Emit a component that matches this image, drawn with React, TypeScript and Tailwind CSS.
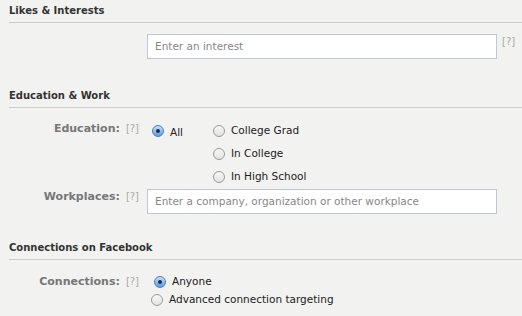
import React from 'react'

const font = { fontFamily: '"Lucida Grande", "DejaVu Sans", "Liberation Sans", sans-serif' }

const Help = () => <span className="ml-[6px] text-[10px] font-normal text-[#aaa]">[?]</span>

const Radio = ({ checked = false }: { checked?: boolean }) => (
  <span
    className={
      checked
        ? 'inline-flex h-[12px] w-[12px] shrink-0 items-center justify-center rounded-full border border-[#4a7fc0] bg-gradient-to-b from-[#c9e0f8] to-[#5a9be0]'
        : 'inline-flex h-[12px] w-[12px] shrink-0 items-center justify-center rounded-full border border-[#9a9a9a] bg-gradient-to-b from-[#f8f8f8] to-[#e2e2e2]'
    }
  >
    {checked && <span className="h-[4px] w-[4px] rounded-full bg-[#1c2f4a]" />}
  </span>
)

const Option = ({ label, checked = false, className = '' }: { label: string; checked?: boolean; className?: string }) => (
  <label className={`flex h-[18px] items-center ${className}`}>
    <Radio checked={checked} />
    <span className="ml-[6px] text-[10.5px] text-[#222]">{label}</span>
  </label>
)

const Heading = ({ children }: { children: React.ReactNode }) => (
  <div className="ml-[9px] border-b border-[#ccc] pb-[4px] pt-[4px] text-[10px] font-bold leading-[14px] text-[#333]">
    {children}
  </div>
)

const Label = ({ children }: { children: React.ReactNode }) => (
  <div className="w-[139px] shrink-0 text-right text-[11px] font-bold leading-[14px] text-[#777]">
    {children}
    <Help />
  </div>
)

const TextBox = ({ placeholder }: { placeholder: string }) => (
  <div className="flex h-[25px] w-[350px] items-center border border-[#bdc7d8] bg-white px-[7px] text-[10.5px] text-[#888]">
    {placeholder}
  </div>
)

export default function App() {
  return (
    <div className="h-[316px] w-[522px] overflow-hidden bg-[#f2f2f0]" style={font}>
      <Heading>Likes &amp; Interests</Heading>
      <div className="mt-[11px] flex">
        <div className="w-[147px] shrink-0" />
        <TextBox placeholder="Enter an interest" />
        <span className="ml-[5px] mt-[1px] text-[10px] leading-[14px] text-[#aaa]">[?]</span>
      </div>

      <div className="mt-[26px]">
        <Heading>Education &amp; Work</Heading>
      </div>
      <div className="mt-[14px] flex">
        <div>
          <Label>Education:</Label>
        </div>
        <div className="ml-[13px] flex">
          <Option label="All" checked className="w-[61px] items-start pt-[3px]" />
          <div className="flex flex-col gap-[5px]">
            <Option label="College Grad" />
            <Option label="In College" />
            <Option label="In High School" />
          </div>
        </div>
      </div>
      <div className="mt-[3px] flex">
        <div className="pt-[1px]">
          <Label>Workplaces:</Label>
        </div>
        <div className="ml-[8px]">
          <TextBox placeholder="Enter a company, organization or other workplace" />
        </div>
      </div>

      <div className="mt-[23px]">
        <Heading>Connections on Facebook</Heading>
      </div>
      <div className="mt-[13px] flex">
        <div className="pt-[2px]">
          <Label>Connections:</Label>
        </div>
        <div className="ml-[12px] flex flex-col">
          <Option label="Anyone" checked className="ml-[3px]" />
          <Option label="Advanced connection targeting" />
        </div>
      </div>
    </div>
  )
}
